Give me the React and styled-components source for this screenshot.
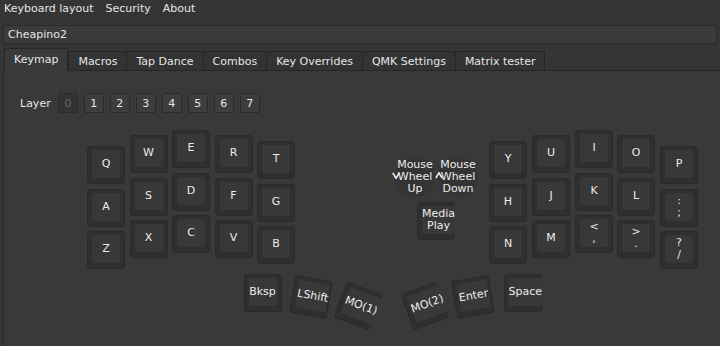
import React from 'react';
import styled, { createGlobalStyle } from 'styled-components';

const GlobalStyle = createGlobalStyle`
  html, body {
    margin: 0;
    padding: 0;
    background: #353535;
    overflow: hidden;
  }
  body {
    font-family: 'DejaVu Sans', 'Liberation Sans', sans-serif;
    font-size: 11px;
    color: #e6e6e6;
  }
`;

const Window = styled.div`
  width: 720px;
  height: 346px;
  display: flex;
  flex-direction: column;
  background: #353535;
`;

const MenuBar = styled.div`
  display: flex;
  gap: 12px;
  height: 17px;
  align-items: center;
  padding-left: 4px;
`;

const MenuItem = styled.span`
  white-space: nowrap;
`;

const Combo = styled.div`
  margin: 8px 3px 0;
  height: 17px;
  display: flex;
  align-items: center;
  padding-left: 4px;
  background: #3b3b3b;
  border: 1px solid #2a2a2a;
  border-radius: 2px;
`;

const TabBar = styled.div`
  display: flex;
  align-items: flex-end;
  height: 21px;
  margin-top: 5px;
  padding-left: 4px;
  position: relative;
  z-index: 1;
`;

const Tab = styled.div`
  height: ${(p) => (p.$active ? '21px' : '18px')};
  padding: 0 9px;
  display: flex;
  align-items: center;
  white-space: nowrap;
  background: ${(p) => (p.$active ? '#393939' : '#333333')};
  border: 1px solid #262626;
  border-bottom: ${(p) => (p.$active ? '1px solid #393939' : 'none')};
  border-radius: 2px 2px 0 0;
  margin-right: ${(p) => (p.$active ? '0' : '-1px')};
  margin-bottom: ${(p) => (p.$active ? '-1px' : '0')};
  color: #e6e6e6;
`;

const Pane = styled.div`
  flex: 1;
  margin-left: 3px;
  border-top: 1px solid #262626;
  border-left: 1px solid #2a2a2a;
  background: #393939;
  display: flex;
  flex-direction: column;
`;

const LayerRow = styled.div`
  display: flex;
  align-items: center;
  gap: 6px;
  margin: 22px 0 0 16px;
  height: 20px;
`;

const LayerLabel = styled.span`
  margin-right: 1px;
`;

const LayerButton = styled.div`
  width: 18px;
  height: 18px;
  display: flex;
  align-items: center;
  justify-content: center;
  border: 1px solid #2a2a2a;
  border-radius: 2px;
  background: ${(p) => (p.$current ? '#333333' : '#3d3d3d')};
  color: ${(p) => (p.$current ? '#666666' : '#e6e6e6')};
`;

const Canvas = styled.div`
  position: relative;
  flex: 1;
  margin-top: 7px;
`;

const KeyCap = styled.div`
  position: absolute;
  left: ${(p) => p.$x}px;
  top: ${(p) => p.$y}px;
  width: 38px;
  height: 38px;
  box-sizing: border-box;
  padding: 3px 4px 5px;
  display: flex;
  background: #2f2f2f;
  border: 1px solid #2a2a2a;
  border-radius: 3px;
  transform: rotate(${(p) => p.$r || 0}deg);
`;

const KeyFace = styled.div`
  flex: 1;
  display: flex;
  flex-direction: column;
  align-items: center;
  justify-content: center;
  background: #383838;
  border-radius: 2px;
  line-height: 12px;
  text-align: center;
  white-space: nowrap;
  color: #ececec;
`;

const Encoder = styled.div`
  position: absolute;
  left: ${(p) => p.$x - 20}px;
  top: ${(p) => p.$y - 20}px;
  width: 40px;
  height: 40px;
  border-radius: 50%;
  background: #343434;
  display: flex;
  flex-direction: column;
  align-items: center;
  justify-content: center;
  line-height: 12px;
  text-align: center;
  color: #ececec;
`;

const Arrow = styled.svg`
  position: absolute;
  left: -3px;
  top: 15px;
`;

const OX = 4;
const OY = 120;
const P = 42.5;

const leftRows = [
  ['Q', 'W', 'E', 'R', 'T'],
  ['A', 'S', 'D', 'F', 'G'],
  ['Z', 'X', 'C', 'V', 'B'],
];
const leftX = [87, 129.5, 172, 214.5, 257];
const leftY = [146, 135, 130, 135, 141];

const rightRows = [
  [['Y'], ['U'], ['I'], ['O'], ['P']],
  [['H'], ['J'], ['K'], ['L'], [':', ';']],
  [['N'], ['M'], ['<', ','], ['>', '.'], ['?', '/']],
];
const rightX = [489, 532, 575, 617, 660];
const rightY = [141, 135, 130, 135, 146];

const keys = [];
leftRows.forEach((row, r) =>
  row.forEach((k, c) => keys.push({ lines: [k], x: leftX[c], y: leftY[c] + r * P })),
);
rightRows.forEach((row, r) =>
  row.forEach((k, c) => keys.push({ lines: k, x: rightX[c], y: rightY[c] + r * P })),
);

// thumb cluster, given by centre
const thumbs = [
  { lines: ['Bksp'], cx: 262.5, cy: 292.5, r: 0 },
  { lines: ['LShift'], cx: 311, cy: 296.5, r: 10 },
  { lines: ['MO(1)'], cx: 358, cy: 306, r: 20 },
  { lines: ['MO(2)'], cx: 425, cy: 306, r: -20 },
  { lines: ['Enter'], cx: 473, cy: 296.5, r: -10 },
  { lines: ['Space'], cx: 522.5, cy: 292.5, r: 0 },
  { lines: ['Media', 'Play'], cx: 436, cy: 221, r: 0 },
];
thumbs.forEach((t) => keys.push({ lines: t.lines, x: t.cx - 19, y: t.cy - 19, r: t.r }));

function Key({ k }) {
  return (
    <KeyCap $x={k.x - OX} $y={k.y - OY} $r={k.r}>
      <KeyFace>
        {k.lines.map((l, i) => (
          <span key={i}>{l}</span>
        ))}
      </KeyFace>
    </KeyCap>
  );
}

function Knob({ x, y, last, up }) {
  return (
    <Encoder $x={x - OX} $y={y - OY}>
      <span>Mouse</span>
      <span>Wheel</span>
      <span>{last}</span>
      <Arrow width="8" height="7" viewBox="0 0 8 7">
        <polyline
          points={up ? '0.8,6.2 4,0.8 7.2,6.2' : '0.8,0.8 4,6.2 7.2,0.8'}
          fill="none"
          stroke="#f0f0f0"
          strokeWidth="1.6"
        />
      </Arrow>
    </Encoder>
  );
}

const tabs = ['Keymap', 'Macros', 'Tap Dance', 'Combos', 'Key Overrides', 'QMK Settings', 'Matrix tester'];

export default function App() {
  return (
    <Window>
      <GlobalStyle />
      <MenuBar>
        <MenuItem>Keyboard layout</MenuItem>
        <MenuItem>Security</MenuItem>
        <MenuItem>About</MenuItem>
      </MenuBar>
      <Combo>Cheapino2</Combo>
      <TabBar>
        {tabs.map((t, i) => (
          <Tab key={t} $active={i === 0}>
            {t}
          </Tab>
        ))}
      </TabBar>
      <Pane>
        <LayerRow>
          <LayerLabel>Layer</LayerLabel>
          {[0, 1, 2, 3, 4, 5, 6, 7].map((n) => (
            <LayerButton key={n} $current={n === 0}>
              {n}
            </LayerButton>
          ))}
        </LayerRow>
        <Canvas>
          <Knob x={415} y={177} last="Up" />
          <Knob x={458} y={177} last="Down" up />
          {keys.map((k, i) => (
            <Key key={i} k={k} />
          ))}
        </Canvas>
      </Pane>
    </Window>
  );
}
